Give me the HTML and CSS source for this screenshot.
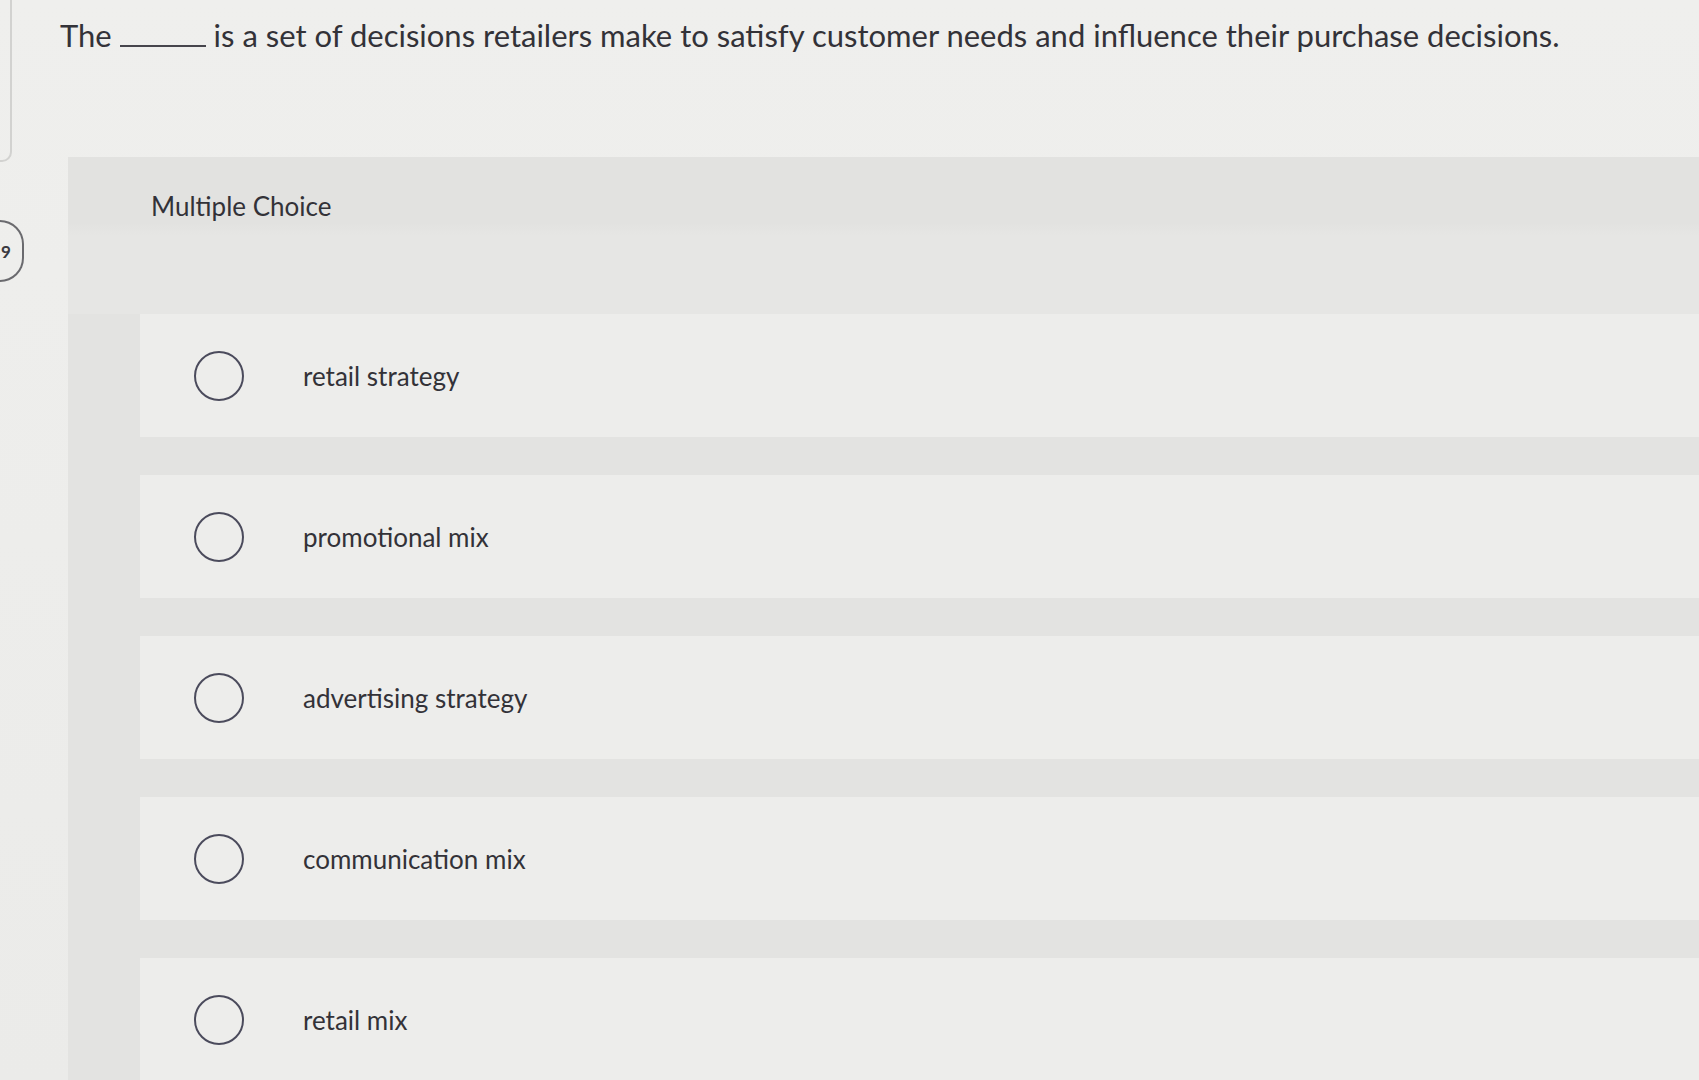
FILE: index.html
```html
<!DOCTYPE html>
<html lang="en">
<head>
<meta charset="utf-8">
<title>Multiple Choice</title>
<link rel="stylesheet" href="styles.css">
</head>
<body>
<div class="screen">
  <aside class="rail">
    <div class="prev-card"></div>
    <div class="qnum">9</div>
  </aside>
  <header class="question">
    <p class="prompt">The <span class="blank"></span> is a set of decisions retailers make to satisfy customer needs and influence their purchase decisions.</p>
  </header>
  <section class="panel">
    <div class="panel-head">Multiple Choice</div>
    <ul class="options">
      <li class="option"><span class="radio"></span><span class="label">retail strategy</span></li>
      <li class="option"><span class="radio"></span><span class="label">promotional mix</span></li>
      <li class="option"><span class="radio"></span><span class="label">advertising strategy</span></li>
      <li class="option"><span class="radio"></span><span class="label">communication mix</span></li>
      <li class="option"><span class="radio"></span><span class="label">retail mix</span></li>
    </ul>
  </section>
</div>
</body>
</html>
```
FILE: styles.css
```css
html, body {
  margin: 0;
  padding: 0;
}
body {
  width: 1699px;
  height: 1080px;
  overflow: hidden;
  background: #ececea;
  font-family: Lato, "Open Sans", Arial, sans-serif;
  color: #333238;
}
.screen {
  display: grid;
  grid-template-columns: 68px 1fr;
  grid-template-rows: 157px 1fr;
  height: 1080px;
  background: linear-gradient(180deg, #efefed 0%, #ebebe9 100%);
}
.rail {
  grid-column: 1;
  grid-row: 1 / 3;
  overflow: hidden;
  display: flex;
  flex-direction: column;
}
.prev-card {
  width: 32px;
  height: 162px;
  margin-left: -20px;
  border: 2px solid #d2d2d0;
  border-top: none;
  border-radius: 0 0 10px 0;
  box-sizing: border-box;
}
.qnum {
  width: 24px;
  height: 62px;
  margin-top: 58px;
  border: 2px solid #6a6a6e;
  border-left: none;
  border-radius: 0 31px 31px 0;
  box-sizing: border-box;
  display: flex;
  align-items: center;
  padding-left: 1px;
  font-size: 17px;
  font-weight: 700;
  color: #3a3a40;
}
.question {
  grid-column: 2;
  grid-row: 1;
  margin-left: -8px;
}
.prompt {
  margin: 16px 0 0;
  font-size: 31px;
  line-height: 38px;
  white-space: nowrap;
}
.blank {
  display: inline-block;
  width: 86px;
  height: 2px;
  background: #46454c;
  vertical-align: baseline;
}
.panel {
  grid-column: 2;
  grid-row: 2;
  background: #e3e3e1;
  display: flex;
  flex-direction: column;
}
.panel-head {
  height: 157px;
  box-sizing: border-box;
  padding: 33px 0 0 83px;
  font-size: 26px;
  line-height: 32px;
  background: linear-gradient(180deg, #e2e2e0 0%, #e2e2e0 42%, #e6e6e4 50%, #e6e6e4 100%);
}
.options {
  list-style: none;
  margin: 0;
  padding: 0 0 0 72px;
  display: flex;
  flex-direction: column;
  gap: 38px;
}
.option {
  height: 123px;
  background: #ededeb;
  display: flex;
  align-items: center;
  padding-left: 54px;
}
.radio {
  width: 50px;
  height: 50px;
  border: 2px solid #4b4b5c;
  border-radius: 50%;
  box-sizing: border-box;
  flex: none;
}
.label {
  margin-left: 59px;
  font-size: 26px;
  line-height: 32px;
  color: #333238;
}
```
